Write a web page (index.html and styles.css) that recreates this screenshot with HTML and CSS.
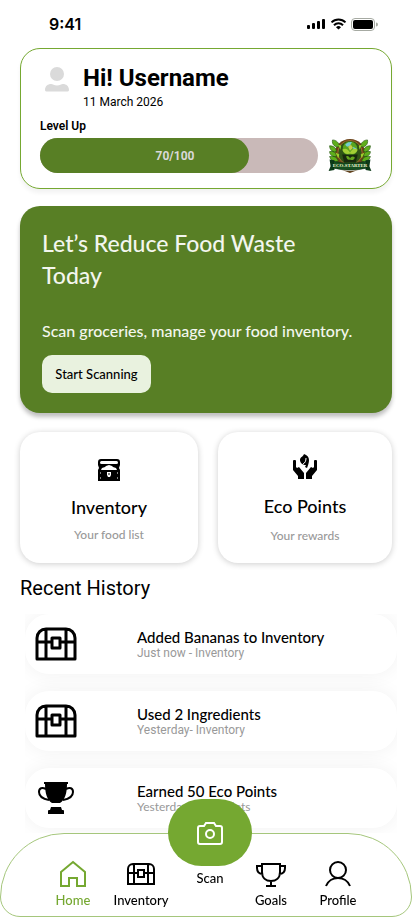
FILE: index.html
```html
<!DOCTYPE html>
<html lang="en">
<head>
	<meta charset="UTF-8">
	<meta name="viewport" content="width=device-width, initial-scale=1.0">
	<title>Home</title>
	<link rel="stylesheet" href="styles.css">
</head>
<body>

	<div class="status-bar">
		<span class="time">9:41</span>
		<div class="status-icons">
			<svg width="19" height="12" viewBox="0 0 19 12">
				<rect x="0" y="7" width="3" height="4" rx="1"/>
				<rect x="5" y="5" width="3" height="6" rx="1"/>
				<rect x="10" y="3" width="3" height="8" rx="1"/>
				<rect x="15" y="1" width="3" height="10" rx="1"/>
			</svg>
			<svg width="17" height="12" viewBox="0 0 17 12">
				<path d="M1.5 4.4a10 10 0 0 1 14 0M4 7.2a6.4 6.4 0 0 1 9 0" fill="none" stroke="#000" stroke-width="2"/>
				<path d="M8.5 11.6L6 9.2a3.6 3.6 0 0 1 5 0z"/>
			</svg>
			<svg width="27" height="13" viewBox="0 0 27 13">
				<rect x="0.5" y="0.5" width="23" height="12" rx="3.5" fill="none" stroke="#a6aaa2"/>
				<rect x="2" y="2" width="20" height="9" rx="2"/>
				<path d="M25 4.5v4a2 2 0 0 0 0-4z" fill="#a6aaa2"/>
			</svg>
		</div>
	</div>

	<main>
		<section class="profile-card">
			<div class="user">
				<svg class="avatar" width="26" height="27" viewBox="0 0 26 27" fill="#dadada">
					<circle cx="13" cy="8" r="7"/>
					<path d="M1 24c0-4 3-6 6-6 2 0 3 1.500 6 1.500s4-1.500 6-1.500c3 0 6 2 6 6 0 1-1 1.500-2 1.500H3c-1 0-2-.5-2-1.500z"/>
				</svg>
				<div>
					<h1>Hi! Username</h1>
					<p class="date">11 March 2026</p>
				</div>
			</div>
			<p class="level">Level Up</p>
			<div class="level-row">
				<div class="bar">
					<div class="bar-fill" style="width: 75%"></div>
					<span class="bar-text">70/100</span>
				</div>
				<svg class="badge" width="44" height="35" viewBox="0 0 44 36">
					<circle cx="22" cy="17" r="16" fill="#6b4218"/>
					<circle cx="22" cy="15" r="12.500" fill="#2f5516" stroke="#a36a2c" stroke-width="1"/>
					<g fill="#5fae1c" stroke="#1f4d0d" stroke-width=".6">
						<path d="M11 9C7 10 3 7 4 2c4 0 7 3 7 7zM8 14C4 15 1 12 1 8c4 0 7 2 7 6zM8 19c-4 1-7-2-7-5 4-1 7 1 7 5zM10 24c-4 1-8-1-9-5 5-1 8 1 9 5z"/>
						<path d="M33 9c4 1 8-2 7-7-4 0-7 3-7 7zM36 14c4 1 7-2 7-6-4 0-7 2-7 6zM36 19c4 1 7-2 7-5-4-1-7 1-7 5zM34 24c4 1 8-1 9-5-5-1-8 1-9 5z"/>
					</g>
					<path d="M10 7l3 1-1 4zM34 7l-3 1 1 4zM7 15l4 2-1 4zM37 15l-4 2 1 4z" fill="#9bd32c"/>
					<circle cx="22" cy="11" r="7.500" fill="#58a51f"/>
					<path d="M17 7c2-3 5-3 7-3l-2 4-3 1zM25 9l4 2-3 2z" fill="#74cdd0"/>
					<path d="M14 12c3-2 6-1 8 3 2-4 5-5 8-3-2 4-5 5-8 4-3 1-6 0-8-4z" fill="#a4cf35"/>
					<path d="M20 9l3-2 2 3-3 3z" fill="#c8cc4a"/>
					<path d="M14 17h16l-2 8H16z" fill="#18290e"/>
					<path d="M18 19c2-1 3 0 4 2 1-2 3-3 5-1-1 3-3 3-5 2-2 1-3 0-4-3z" fill="#64a41e"/>
					<path d="M1 22l5 1v10l-6 1 2-5zM43 22l-5 1v10l6 1-2-5z" fill="#0c3a18"/>
					<path d="M5 24q17 4 34 0v7q-17 4-34 0z" fill="#155020" stroke="#092b10" stroke-width=".6"/>
					<path d="M14 33q8 2 16 0l-8 3z" fill="#60401b"/>
					<text x="22" y="30" text-anchor="middle">ECO-STARTER</text>
				</svg>
			</div>
		</section>

		<section class="hero">
			<h2>Let’s Reduce Food Waste Today</h2>
			<p>Scan groceries, manage your food inventory.</p>
			<button type="button" class="start">Start Scanning</button>
		</section>

		<section class="tiles">
			<a href="#inventory" class="tile">
				<svg width="24" height="24" viewBox="0 0 24 24">
					<path d="M4 1h16a3 3 0 0 1 3 3v3l-1 3 1 2v11H1V12l1-2-1-3V4a3 3 0 0 1 3-3z"/>
					<rect x="3" y="3" width="18" height="3" rx="1.500" fill="#fff"/>
					<path d="M4 12l1-2 3-1 1-1 3-1 3 1 1 1 3 1 1 2z" fill="#fff"/>
					<path d="M10 14h4v3l-1 2h-2l-1-2z" fill="#fff"/>
					<path d="M12 15v2" stroke="#000"/>
					<path d="M3 15h1M20 15h1M3 20h1M20 20h1" stroke="#fff"/>
				</svg>
				<span class="tile-name">Inventory</span>
				<span class="tile-text">Your food list</span>
			</a>
			<a href="#points" class="tile eco">
				<svg width="24" height="26" viewBox="0 0 24 26">
					<path d="M0 7q0-1 1-1h1q1 0 1 1v6l1 1 2-1 5 6v6H5v-3l-5-6z"/>
					<path d="M24 7q0-1-1-1h-1q-1 0-1 1v6l-1 1-2-1-5 6v6h6v-3l5-6z"/>
					<path d="M11 0c3 1 5 3 5 6 0 3-1 5-2 8l-2-1 1-2c-3 0-6-2-6-5 0-3 3-3 4-6z"/>
					<path d="M13 4c0 3-1 5-3 6" fill="none" stroke="#fff"/>
				</svg>
				<span class="tile-name">Eco Points</span>
				<span class="tile-text">Your rewards</span>
			</a>
		</section>

		<h3>Recent History</h3>
		<ul class="history">
			<li>
				<svg class="chest" width="42" height="34" viewBox="0 0 42 34">
					<path d="M2 32V11a9 9 0 0 1 9-9h20a9 9 0 0 1 9 9v21zM2 15h14M24 15h16M11 2v30M31 2v30M17 11h8v10h-8z"/>
				</svg>
				<div>
					<p class="item-name">Added Bananas to Inventory</p>
					<p class="item-text">Just now - Inventory</p>
				</div>
			</li>
			<li>
				<svg class="chest" width="42" height="34" viewBox="0 0 42 34">
					<path d="M2 32V11a9 9 0 0 1 9-9h20a9 9 0 0 1 9 9v21zM2 15h14M24 15h16M11 2v30M31 2v30M17 11h8v10h-8z"/>
				</svg>
				<div>
					<p class="item-name">Used 2 Ingredients</p>
					<p class="item-text">Yesterday- Inventory</p>
				</div>
			</li>
			<li>
				<svg class="cup" width="42" height="34" viewBox="0 0 42 34">
					<path d="M9 1h24v2h-1c0 9-2 16-7 19h-8C12 19 10 12 10 3H9z"/>
					<path d="M11 8C7 6 4 7 4 11c0 4 4 7 10 8M31 8c4-2 7-1 7 3 0 4-4 7-10 8" fill="none" stroke="#000" stroke-width="2"/>
					<path d="M16 26h10l1 3h1q1 0 1 1v3H13v-3q0-1 1-1h1z"/>
				</svg>
				<div>
					<p class="item-name">Earned 50 Eco Points</p>
					<p class="item-text alt">Yesterday- Eco Points</p>
				</div>
			</li>
		</ul>
	</main>

	<nav>
		<a href="#home" class="active">
			<svg width="28" height="28" viewBox="0 0 28 28">
				<path d="M2 12L14 2l12 10v14h-8v-8h-8v8H2z"/>
			</svg>
			Home
		</a>
		<a href="#inventory">
			<svg width="30" height="28" viewBox="0 0 30 28">
				<path d="M2 24V9a5 5 0 0 1 5-5h16a5 5 0 0 1 5 5v15zM2 13h10M18 13h10M8 4v20M22 4v20M12 10h6v7h-6z"/>
			</svg>
			Inventory
		</a>
		<a href="#scan" class="scan">
			<span class="scan-button">
				<svg width="28" height="28" viewBox="0 0 28 28">
					<path d="M4 7h4l2-3h8l2 3h4q2 0 2 2v14q0 2-2 2H4q-2 0-2-2V9q0-2 2-2z"/>
					<circle cx="14" cy="15" r="4"/>
				</svg>
			</span>
			Scan
		</a>
		<a href="#goals">
			<svg width="32" height="28" viewBox="0 0 32 28">
				<path d="M7 4h18v8c0 6-4 9-9 9s-9-3-9-9zM7 6H2v2c0 4 2 6 6 6M25 6h5v2c0 4-2 6-6 6M16 21v5M11 26h10"/>
			</svg>
			Goals
		</a>
		<a href="#profile">
			<svg width="28" height="28" viewBox="0 0 28 28">
				<circle cx="14" cy="10" r="8"/>
				<path d="M2 26c2-5 7-8 12-8s10 3 12 8"/>
			</svg>
			Profile
		</a>
	</nav>

</body>
</html>
```

FILE: styles.css
```css
* {
	box-sizing: border-box;
}
body {
	margin: 0;
	min-height: 100vh;
	background: #fff;
	color: #000;
	font-family: Lato, sans-serif;
	font-weight: 500;
}
h1, h2, h3, p, ul {
	margin: 0;
	padding: 0;
}
a {
	color: inherit;
	text-decoration: none;
}

.status-bar {
	display: flex;
	justify-content: space-between;
	align-items: center;
	height: 48px;
	padding: 0 34px 0 49px;
}
.time {
	font: 600 16px Inter, sans-serif;
}
.status-icons {
	display: flex;
	align-items: center;
	gap: 4px;
}

main {
	padding: 0 20px 84px;
}

.profile-card {
	padding: 16px 19px 15px;
	border: 1px solid #75a831;
	border-radius: 20px;
	box-shadow: 0 4px 4px rgba(0, 0, 0, 0.05);
	font-family: Roboto, sans-serif;
}
.user {
	display: flex;
	gap: 13px;
	padding-left: 4px;
}
.avatar {
	margin-top: 1px;
}
h1 {
	font-size: 24px;
	line-height: 26px;
	font-weight: 700;
}
.date {
	font-size: 12px;
	line-height: 22px;
	font-weight: 400;
}
.level {
	margin-top: 1px;
	font-size: 12px;
	line-height: 24px;
	font-weight: 600;
}
.level-row {
	display: flex;
	align-items: center;
	gap: 10px;
}
.bar {
	position: relative;
	flex: 1;
	height: 35px;
	border-radius: 18px;
	background: #c9b9b8;
}
.bar-fill {
	height: 100%;
	border-radius: 18px;
	background: #587f25;
}
.bar-text {
	position: absolute;
	inset: 0;
	padding-right: 8px;
	color: #d9d9d9;
	font-size: 12px;
	line-height: 36px;
	font-weight: 700;
	text-align: center;
}
.badge text {
	fill: #f1f3d2;
	font: 700 5px "Liberation Serif", serif;
}

.hero {
	margin-top: 17px;
	padding: 21px 22px 20px;
	border-radius: 20px;
	background: #587f25;
	box-shadow: 0 4px 4px rgba(0, 0, 0, 0.25);
	color: #f3f6ee;
}
.hero h2 {
	max-width: 280px;
	font-size: 23px;
	line-height: 32px;
	font-weight: 500;
}
.hero p {
	margin-top: 28px;
	font-size: 16px;
	line-height: 24px;
	white-space: nowrap;
}
.start {
	display: block;
	min-width: 109px;
	height: 38px;
	margin-top: 12px;
	padding: 0 12px;
	border: 0;
	border-radius: 10px;
	background: #e9f2df;
	color: #000;
	font: 500 13px Lato, sans-serif;
}

.tiles {
	display: grid;
	grid-template-columns: 178fr 174fr;
	gap: 20px;
	margin-top: 19px;
}
.tile {
	display: flex;
	flex-direction: column;
	align-items: center;
	height: 131px;
	padding-top: 25px;
	border-radius: 20px;
	box-shadow: 0 1px 6px rgba(0, 0, 0, 0.2);
}
.tile svg {
	height: 26px;
}
.tile-name {
	margin-top: 11px;
	font-size: 18px;
	line-height: 26px;
}
.tile-text {
	margin-top: 6px;
	color: #999;
	font-size: 12px;
	line-height: 18px;
}
.tile.eco {
	padding-top: 22px;
}
.eco .tile-name {
	margin-top: 13px;
}
.eco .tile-text {
	margin-top: 8px;
}

h3 {
	margin-top: 13px;
	font: 400 20px/24px Roboto, sans-serif;
}
.history {
	display: flex;
	flex-direction: column;
	gap: 17px;
	margin: 14px -5px 0 5px;
	padding-bottom: 5px;
	overflow: hidden;
	list-style: none;
}
.history li {
	display: flex;
	align-items: center;
	gap: 60px;
	height: 60px;
	padding-left: 10px;
	border-radius: 24px;
	background: #fff;
	box-shadow: 0 0 20px rgba(0, 0, 0, 0.06);
}
.chest path {
	fill: none;
	stroke: #000;
	stroke-width: 3;
	stroke-linejoin: round;
}
.item-name {
	font-size: 15px;
	line-height: 18px;
}
.item-text {
	color: #999;
	font: 400 12px/14px Roboto, sans-serif;
}
.item-text.alt {
	font-family: Lato, sans-serif;
}

nav {
	position: fixed;
	left: 0;
	right: 0;
	bottom: 0;
	display: grid;
	grid-template-columns: minmax(0, 68fr) minmax(0, 68fr) minmax(0, 70fr) minmax(0, 52fr) minmax(0, 82fr);
	height: 84px;
	padding: 0 32px 0 38px;
	border: 1px solid #a5c67c;
	border-radius: 64px 64px 20px 20px;
	background: #fff;
	font-size: 13px;
	line-height: 16px;
}
nav a {
	display: flex;
	flex-direction: column;
	align-items: center;
	gap: 4px;
	padding-top: 26px;
}
nav svg {
	fill: none;
	stroke: currentColor;
	stroke-width: 2;
	flex-shrink: 0;
}
nav .active {
	color: #75a831;
}
nav .scan {
	margin-top: -35px;
	padding-top: 0;
}
.scan-button {
	display: flex;
	justify-content: center;
	align-items: center;
	width: 84px;
	height: 67px;
	border-radius: 34px;
	background: #75a831;
	color: #fff;
}
```
